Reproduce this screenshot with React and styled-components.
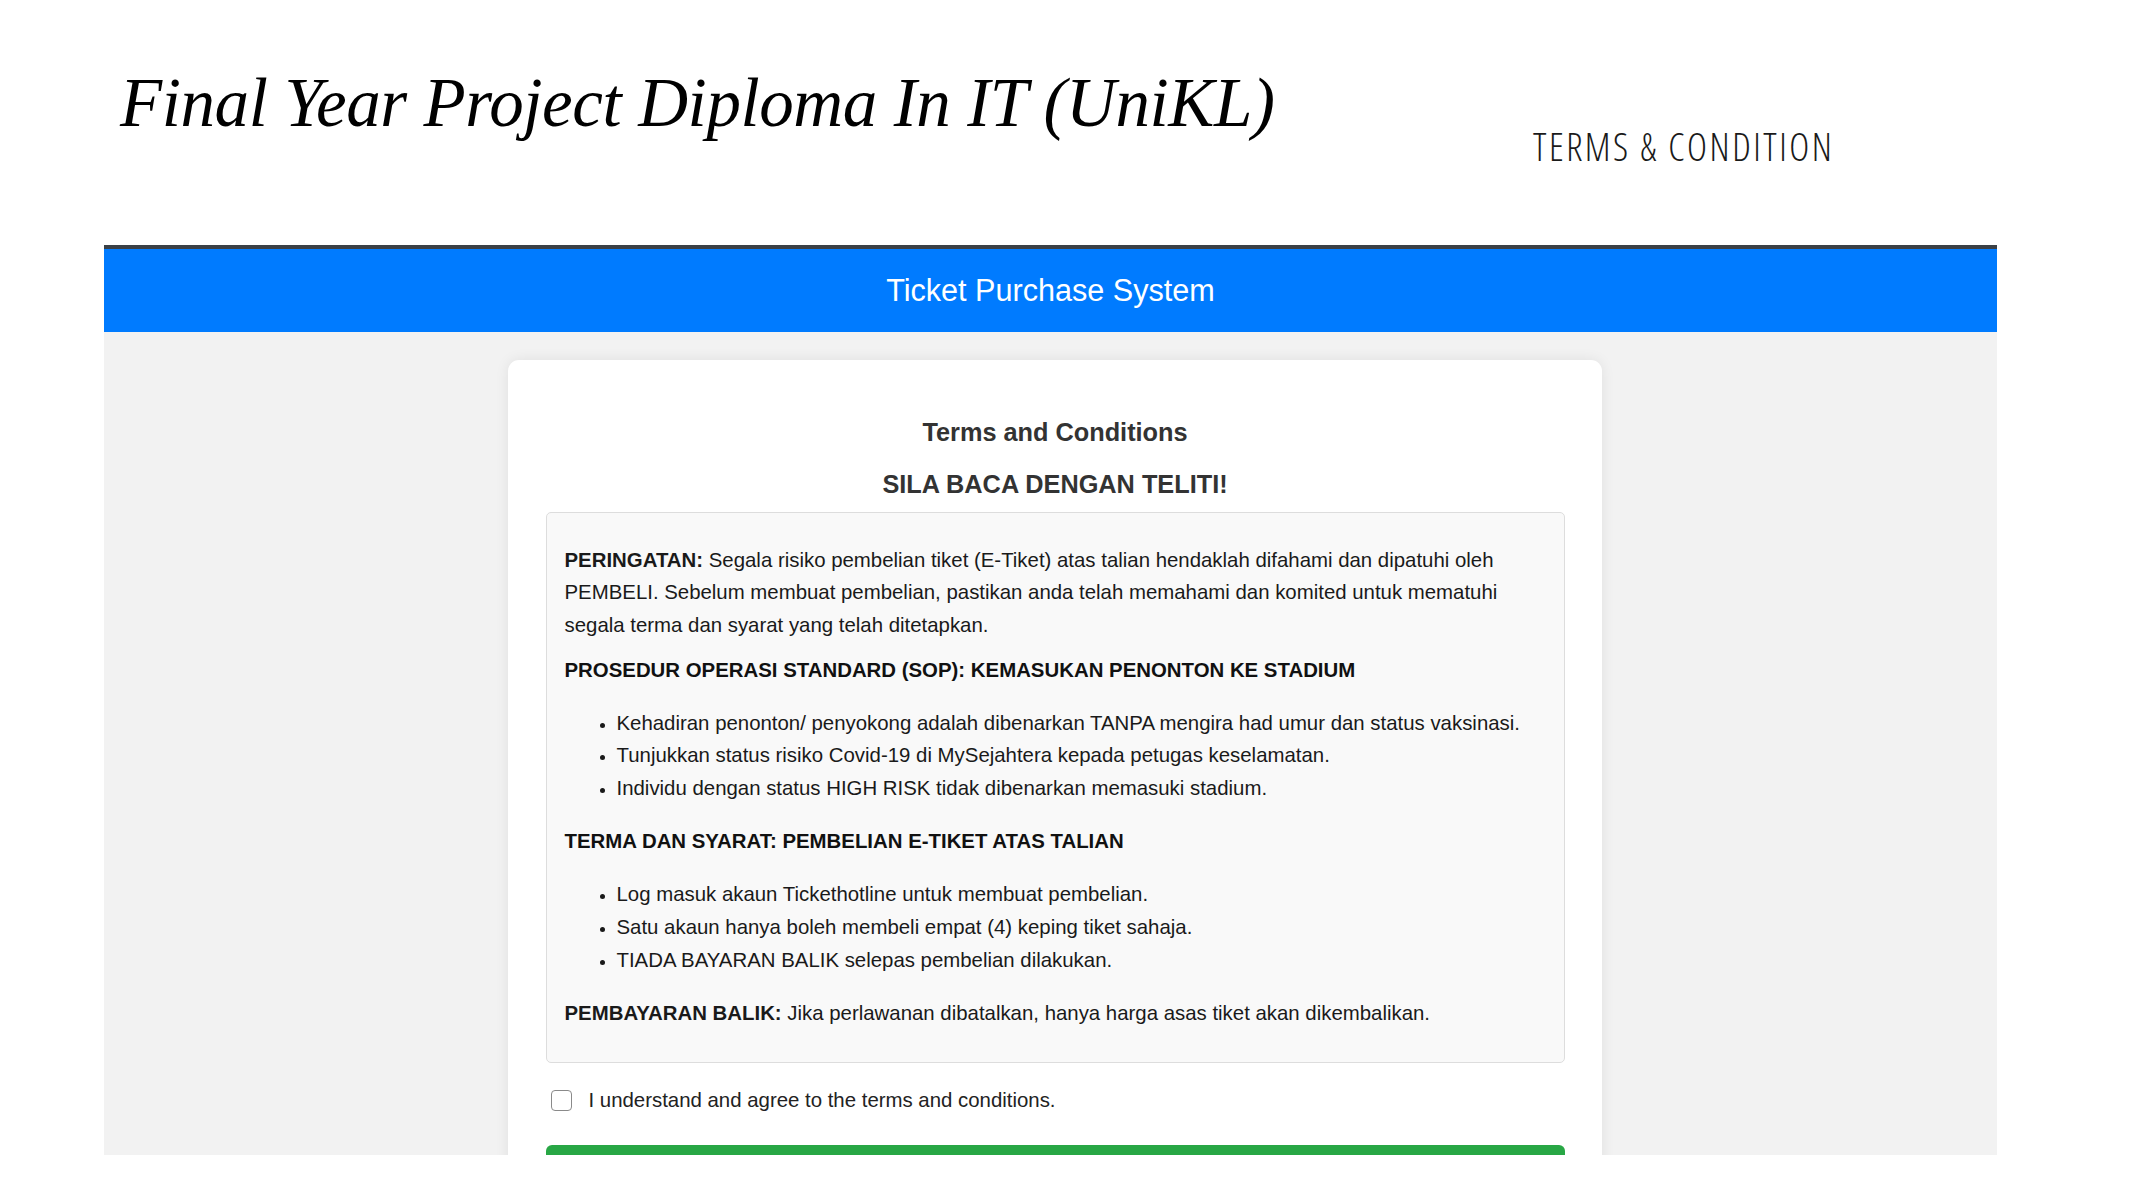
import React, { useState } from "react";
import styled, { createGlobalStyle } from "styled-components";

const GlobalStyle = createGlobalStyle`
  html, body {
    margin: 0;
    padding: 0;
    background: #ffffff;
  }
  body {
    width: 2135px;
    height: 1200px;
    overflow: hidden;
    font-family: "Liberation Sans", Arial, sans-serif;
  }
`;

const Slide = styled.div`
  width: 2135px;
  height: 1200px;
  display: flex;
  flex-direction: column;
  background: #ffffff;
`;

const Header = styled.header`
  height: 245px;
  flex: none;
  display: flex;
  align-items: flex-start;
  padding-left: 120px;
  box-sizing: border-box;
`;

const SlideTitle = styled.h1`
  width: 1413px;
  flex: none;
  margin: 62px 0 0 0;
  font-family: "Liberation Serif", "Times New Roman", serif;
  font-style: italic;
  font-weight: 400;
  font-size: 69px;
  line-height: 1.2;
  color: #000000;
  letter-spacing: -0.4px;
`;

const SlideTag = styled.div`
  margin-top: 127px;
  font-family: "Open Sans", Lato, sans-serif;
  font-weight: 300;
  font-stretch: 87%;
  font-size: 38px;
  line-height: 1;
  color: #1a1a1a;
  letter-spacing: 2.5px;
  white-space: nowrap;
`;

const Shot = styled.section`
  margin: 0 138px 0 104px;
  height: 910px;
  overflow: hidden;
  display: flex;
  flex-direction: column;
  background: #f2f2f2;
`;

const TopBar = styled.div`
  height: 83px;
  flex: none;
  display: flex;
  align-items: center;
  justify-content: center;
  background: #007bff;
  border-top: 4px solid #3b4046;
  color: #ffffff;
  font-size: 30.6px;
`;

const Stage = styled.div`
  display: flex;
  justify-content: center;
  padding: 28px 0 0 8px;
`;

const Card = styled.div`
  width: 1094px;
  box-sizing: border-box;
  padding: 54px 37px 40px 38px;
  background: #ffffff;
  border-radius: 11px;
  box-shadow: 0 0 14px rgba(0, 0, 0, 0.08);
  display: flex;
  flex-direction: column;
`;

const CardTitle = styled.h2`
  margin: 0;
  text-align: center;
  font-size: 25.3px;
  line-height: 36px;
  font-weight: 700;
  color: #333333;
`;

const CardSub = styled.h3`
  margin: 16px 0 10px;
  text-align: center;
  font-size: 25.3px;
  line-height: 36px;
  font-weight: 700;
  color: #333333;
`;

const TermsBox = styled.div`
  padding: 30.6px 18px 32.7px;
  background: #f9f9f9;
  border: 1px solid #dddddd;
  border-radius: 5px;
  font-size: 20.4px;
  line-height: 32.7px;
  color: #1a1a1a;
`;

const Para = styled.p`
  margin: 0 0 ${(p) => (p.$gap ? "12px" : "0")};
`;

const Section = styled.h4`
  margin: 0;
  font-size: 20.4px;
  line-height: 32.7px;
  font-weight: 700;
  color: #111111;
`;

const Bullets = styled.ul`
  margin: 20.3px 0;
  padding-left: 52px;

  li::marker {
    font-size: 18px;
  }
`;

const AgreeRow = styled.label`
  margin: 23px 0 29px;
  height: 30px;
  display: flex;
  align-items: center;
  gap: 17px;
  padding-left: 5px;
  font-size: 20.4px;
  color: #222222;
  cursor: pointer;
`;

const Check = styled.input`
  appearance: none;
  margin: 0;
  width: 21px;
  height: 21px;
  border: 1.5px solid #8a8a8a;
  border-radius: 4px;
  background: #ffffff;

  &:checked {
    background: #007bff;
    border-color: #007bff;
  }
`;

const Proceed = styled.button`
  height: 60px;
  flex: none;
  border: none;
  border-radius: 6px;
  background: #28a745;
  color: #ffffff;
  font-size: 20px;
  font-family: inherit;
`;

export default function App() {
  const [agreed, setAgreed] = useState(false);

  return (
    <>
      <GlobalStyle />
      <Slide>
        <Header>
          <SlideTitle>Final Year Project Diploma In IT (UniKL)</SlideTitle>
          <SlideTag>TERMS &amp; CONDITION</SlideTag>
        </Header>
        <Shot>
          <TopBar>Ticket Purchase System</TopBar>
          <Stage>
            <Card>
              <CardTitle>Terms and Conditions</CardTitle>
              <CardSub>SILA BACA DENGAN TELITI!</CardSub>
              <TermsBox>
                <Para $gap>
                  <strong>PERINGATAN:</strong> Segala risiko pembelian tiket
                  (E-Tiket) atas talian hendaklah difahami dan dipatuhi oleh
                  PEMBELI. Sebelum membuat pembelian, pastikan anda telah
                  memahami dan komited untuk mematuhi segala terma dan syarat
                  yang telah ditetapkan.
                </Para>
                <Section>
                  PROSEDUR OPERASI STANDARD (SOP): KEMASUKAN PENONTON KE STADIUM
                </Section>
                <Bullets>
                  <li>
                    Kehadiran penonton/ penyokong adalah dibenarkan TANPA
                    mengira had umur dan status vaksinasi.
                  </li>
                  <li>
                    Tunjukkan status risiko Covid-19 di MySejahtera kepada
                    petugas keselamatan.
                  </li>
                  <li>
                    Individu dengan status HIGH RISK tidak dibenarkan memasuki
                    stadium.
                  </li>
                </Bullets>
                <Section>TERMA DAN SYARAT: PEMBELIAN E-TIKET ATAS TALIAN</Section>
                <Bullets>
                  <li>Log masuk akaun Tickethotline untuk membuat pembelian.</li>
                  <li>Satu akaun hanya boleh membeli empat (4) keping tiket sahaja.</li>
                  <li>TIADA BAYARAN BALIK selepas pembelian dilakukan.</li>
                </Bullets>
                <Para>
                  <strong>PEMBAYARAN BALIK:</strong> Jika perlawanan dibatalkan,
                  hanya harga asas tiket akan dikembalikan.
                </Para>
              </TermsBox>
              <AgreeRow>
                <Check
                  type="checkbox"
                  checked={agreed}
                  onChange={(e) => setAgreed(e.target.checked)}
                />
                I understand and agree to the terms and conditions.
              </AgreeRow>
              <Proceed type="button" disabled={!agreed} />
            </Card>
          </Stage>
        </Shot>
      </Slide>
    </>
  );
}
